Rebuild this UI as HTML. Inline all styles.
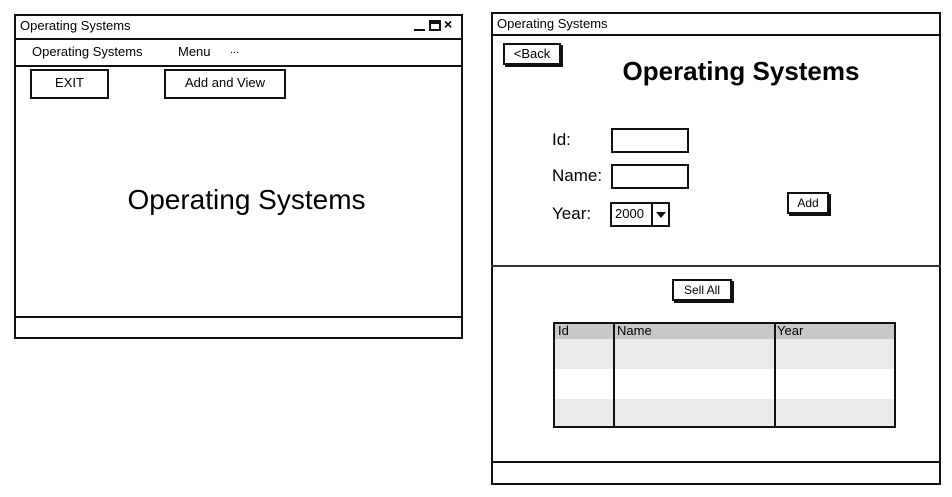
<!DOCTYPE html>
<html><head><meta charset="utf-8"><style>
*{margin:0;padding:0;box-sizing:border-box}
body{width:952px;height:497px;background:#fff;position:relative;overflow:hidden;font-family:"Liberation Sans",sans-serif;color:#000}
.a{position:absolute}
.b{position:absolute;border:2px solid #111;background:#fff}
.btn{position:absolute;border:2px solid #111;background:#fff;box-shadow:2px 2px 0 #111;font-size:12px;text-align:center}
.t{position:absolute;white-space:nowrap}
.hl{position:absolute;height:2px;background:#111}
.vl{position:absolute;width:2px;background:#111}
</style></head><body>
<!-- left window -->
<div class="b" style="left:14px;top:14px;width:449px;height:325px"></div>
<div class="t" style="left:20px;top:18px;font-size:13px">Operating Systems</div>
<div class="a" style="left:414px;top:29px;width:11px;height:2px;background:#111"></div>
<div class="a" style="left:429px;top:20px;width:12px;height:11px;border:2px solid #111;border-top-width:4px"></div>
<div class="t" style="left:444px;top:16px;font-size:14px;font-weight:bold">×</div>
<div class="b" style="left:14px;top:38px;width:449px;height:29px"></div>
<div class="t" style="left:32px;top:44px;font-size:13px">Operating Systems</div>
<div class="t" style="left:178px;top:44px;font-size:13px">Menu</div>
<div class="t" style="left:230px;top:44px;font-size:11px">...</div>
<div class="b" style="left:30px;top:69px;width:79px;height:30px"></div>
<div class="t" style="left:30px;top:75px;width:79px;text-align:center;font-size:13px">EXIT</div>
<div class="b" style="left:164px;top:69px;width:122px;height:30px"></div>
<div class="t" style="left:164px;top:75px;width:122px;text-align:center;font-size:13px">Add and View</div>
<div class="t" style="left:14px;top:184px;width:465px;text-align:center;font-size:28px">Operating Systems</div>
<div class="hl" style="left:14px;top:316px;width:449px"></div>

<!-- right window -->
<div class="b" style="left:491px;top:12px;width:450px;height:473px"></div>
<div class="t" style="left:497px;top:16px;font-size:13px">Operating Systems</div>
<div class="hl" style="left:491px;top:34px;width:450px"></div>
<div class="btn" style="left:503px;top:43px;width:58px;height:22px;line-height:18px;font-size:13px">&lt;Back</div>
<div class="t" style="left:560px;top:56px;width:362px;text-align:center;font-size:26px;font-weight:bold">Operating Systems</div>
<div class="t" style="left:552px;top:130px;font-size:17px">Id:</div>
<div class="b" style="left:611px;top:128px;width:78px;height:25px"></div>
<div class="t" style="left:552px;top:166px;font-size:17px">Name:</div>
<div class="b" style="left:611px;top:164px;width:78px;height:25px"></div>
<div class="t" style="left:552px;top:204px;font-size:17px">Year:</div>
<div class="b" style="left:610px;top:202px;width:60px;height:25px"></div>
<div class="vl" style="left:651px;top:202px;height:25px"></div>
<div class="t" style="left:615px;top:206px;font-size:13px">2000</div>
<div class="a" style="left:656px;top:212px;width:0;height:0;border-left:5px solid transparent;border-right:5px solid transparent;border-top:6px solid #111"></div>
<div class="btn" style="left:787px;top:192px;width:42px;height:22px;line-height:18px">Add</div>
<div class="hl" style="left:491px;top:265px;width:450px;height:1.5px;background:#333"></div>
<div class="btn" style="left:672px;top:279px;width:60px;height:22px;line-height:18px">Sell All</div>
<!-- table -->
<div class="a" style="left:553px;top:322px;width:343px;height:106px;background:#ebebeb;border:2px solid #111"></div>
<div class="a" style="left:555px;top:324px;width:339px;height:15px;background:#c8c8c8"></div>
<div class="a" style="left:555px;top:369px;width:339px;height:30px;background:#fff"></div>
<div class="vl" style="left:613px;top:322px;height:106px"></div>
<div class="vl" style="left:774px;top:322px;height:106px"></div>
<div class="t" style="left:558px;top:323px;font-size:13px">Id</div>
<div class="t" style="left:617px;top:323px;font-size:13px">Name</div>
<div class="t" style="left:777px;top:323px;font-size:13px">Year</div>
<div class="hl" style="left:491px;top:461px;width:450px"></div>
</body></html>
